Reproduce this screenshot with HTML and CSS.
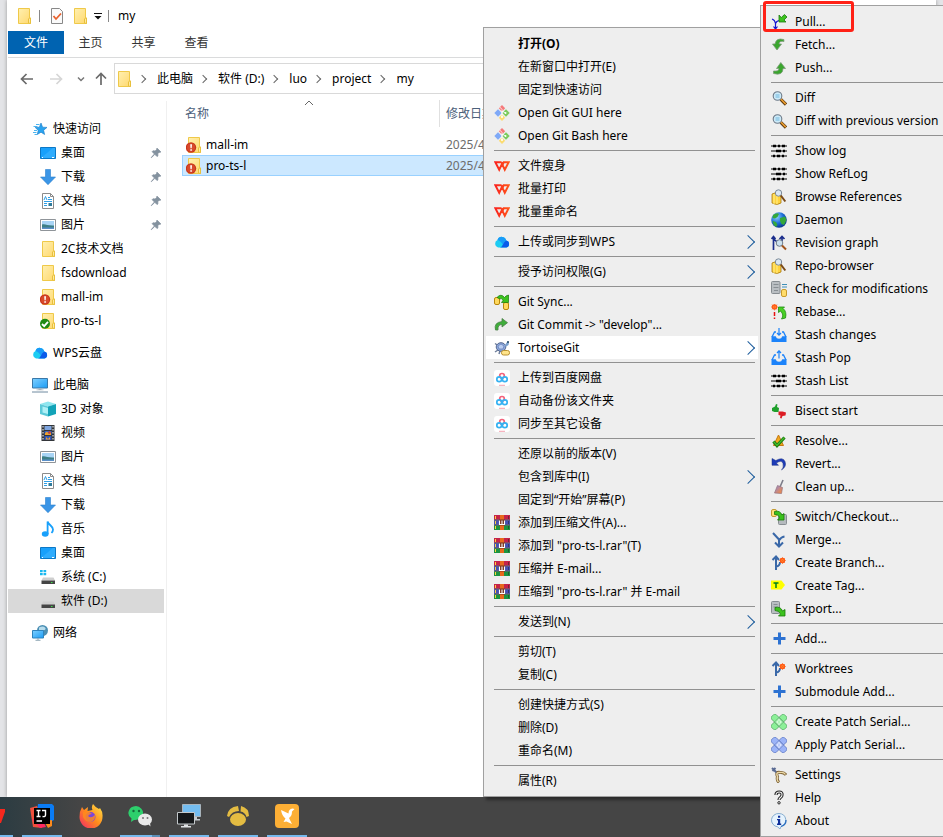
FILE: index.html
```html
<!DOCTYPE html>
<html lang="zh-CN">
  <head>
    <meta charset="utf-8">
    <title>my</title>
    <link rel="stylesheet" href="styles.css">
  </head>
  <body>
    <!-- Icon sprite, everything on a 16x16 grid -->
    <svg class="sprite" aria-hidden="true">
      <defs>
        <linearGradient id="g-folder" x1="0" y1="0" x2="1" y2="1"><stop offset="0" stop-color="#fff0b0"/><stop offset="1" stop-color="#ffd86e"/></linearGradient>
        <linearGradient id="g-cloud" x1="0" y1="0" x2="1" y2="0"><stop offset="0" stop-color="#1cc9f5"/><stop offset="1" stop-color="#1cd8e8"/></linearGradient>
        <linearGradient id="g-screen" x1="0" y1="0" x2="1" y2="1"><stop offset="0" stop-color="#7fd0ff"/><stop offset="1" stop-color="#1b9cf5"/></linearGradient>
        <linearGradient id="g-wps" gradientUnits="userSpaceOnUse" x1="0" y1="0" x2="16" y2="0"><stop offset="0" stop-color="#fa1e1e"/><stop offset="1" stop-color="#ff5a1a"/></linearGradient>
        <linearGradient id="g-broom" x1="0" y1="0" x2="1" y2="1"><stop offset="0" stop-color="#8a8ae0"/><stop offset="1" stop-color="#ff8a30"/></linearGradient>
        <radialGradient id="g-globe" cx=".35" cy=".3" r=".8"><stop offset="0" stop-color="#8fd4ff"/><stop offset=".5" stop-color="#1f6fd8"/><stop offset="1" stop-color="#062a80"/></radialGradient>
        <linearGradient id="g-fox" x1="1" y1="0" x2="0" y2="1"><stop offset="0" stop-color="#ffe94a"/><stop offset=".5" stop-color="#ff8a1c"/><stop offset="1" stop-color="#f0246e"/></linearGradient>
      </defs>
      <symbol id="folder" viewBox="0 0 16 16"><path d="M2.500.5h11v9.500h1v5.500h-12z" fill="url(#g-folder)" stroke="#efc949"/><path d="M12.500 15V11l1-1h1v5.500z" fill="#ffe9a0" stroke="#e8c03c"/></symbol>
      <symbol id="folder-bad" viewBox="0 0 16 16"><use href="#folder"/><circle cx="5" cy="10.500" r="5.200" fill="#c8361c"/><circle cx="5" cy="10.500" r="4" fill="#d84a2c"/><path d="M4.200 7.300h1.800L5.700 11.300H4.500zM4.300 12.200h1.600v1.500H4.300z" fill="#fff"/></symbol>
      <symbol id="folder-ok" viewBox="0 0 16 16"><use href="#folder"/><circle cx="5" cy="10.800" r="5" fill="#1f8a12"/><path d="M2 11l2.200 2.200L8 8.800" fill="none" stroke="#fff" stroke-width="1.800"/></symbol>
      <symbol id="star" viewBox="0 0 16 16"><path d="M9 2l1.600 4.200 4.400.2-3.400 2.800 1 4.300L9 11.200l-3.700 2.300.9-4.200L3.200 6.500l4.200-.3z" fill="#2aa3ef" stroke="#1478c8" stroke-width=".6"/><path d="M4 3.500h3.500M1.500 5.500h4M2 9.500h3M1 11.500h3.500M2.500 13.500H5" stroke="#4ab4f0"/></symbol>
      <symbol id="desktop" viewBox="0 0 16 16"><path d="M.5 2.500h15v11H.5z" fill="#18a0fb" stroke="#0c78c6"/><path d="M1 13L13 3h2v10z" fill="#3fb4ff" opacity=".6"/><path d="M2 12.500h1M12 12.500h2" stroke="#fff"/></symbol>
      <symbol id="download" viewBox="0 0 16 16"><path d="M5.500.5h5v7.500h5L8 15.700.5 8h5z" fill="#3a95e6" stroke="#2a7fce" stroke-width=".6"/></symbol>
      <symbol id="document" viewBox="0 0 16 16"><path d="M2.500.5h8l3 3v12h-11z" fill="#fff" stroke="#8b8b8b"/><path d="M10.500.5v3h3" fill="none" stroke="#8b8b8b"/><path d="M4 7l1.500-3.500L7 7M8 4.500h2M8 6.500h4M4 8.500h8M4 10.500h3M4 12.500h3" fill="none" stroke="#2f9fe6"/><path d="M8.500 10h3.500v3H8.500z" fill="#2f7a9a"/></symbol>
      <symbol id="picture" viewBox="0 0 16 16"><path d="M.5 2.500h15v11H.5z" fill="#fff" stroke="#8f9499"/><path d="M2 4h12v8H2z" fill="#a8d4f5"/><path d="M2 7.500c3-1 6 1.500 12 1V12H2z" fill="#3d7f86"/><path d="M2 10.500h12V12H2z" fill="#5a8fc8"/></symbol>
      <symbol id="cloud" viewBox="0 0 16 16"><path d="M4 13.500a4 4 0 0 1-.5-7.500A4.500 4.500 0 0 1 12.200 6.500 3.600 3.600 0 0 1 12.500 13.500z" fill="url(#g-cloud)"/><path d="M3.500 6A4.500 4.500 0 0 1 12.200 6.500L12 9 9 11Q7 7 3.500 6z" fill="#199bf8"/><path d="M12.200 6.500A3.600 3.600 0 0 1 12.500 13.500H5.500Q8 13 9 10.500T12.200 6.500z" fill="#0b5bea"/></symbol>
      <symbol id="computer" viewBox="0 0 16 16"><path d="M.5 1.500h15v9.500H.5z" fill="url(#g-screen)" stroke="#3a78a8"/><path d="M6.500 11.500h3v1h2v.8h-7v-.8h2z" fill="#a8b4bc"/><path d="M0 15h16" stroke="#6f8aa0"/></symbol>
      <symbol id="cube" viewBox="0 0 16 16"><path d="M0 3l8-2.500L16 3 8 5.500z" fill="#8fe6ef"/><path d="M0 3l8 2.500v10L0 13z" fill="#5cc9d8"/><path d="M16 3L8 5.500v10l8-2.500z" fill="#12a3b8"/><path d="M2.500 5.500L8 7v6l-5.500-1.500z" fill="#aef0f6"/></symbol>
      <symbol id="video" viewBox="0 0 16 16"><path d="M1.500 0h13v16h-13z" fill="#33363a"/><path d="M3 1v14M13 1v14" stroke="#fff" stroke-dasharray="1.500 1.500"/><path d="M4.500 1h7v4h-7z" fill="#7fa6e0"/><path d="M4.500 6h7v4h-7z" fill="#2e62c8"/><path d="M4.500 11h7v4h-7z" fill="#3156b8"/><path d="M5 8l2-1.500L9 9l2-2v3H5zM6 12l2 2 2-2v2.500H6z" fill="#f0a02c"/><circle cx="9.500" cy="7.500" r="1.200" fill="#d83c2c"/></symbol>
      <symbol id="music" viewBox="0 0 16 16"><ellipse cx="5.200" cy="13" rx="3.400" ry="2.700" fill="#18a0fb"/><path d="M7.600 13V.5C8.500 4 13 5 13 8.500c0 1.500-.6 2.500-1.500 3.500" fill="none" stroke="#18a0fb" stroke-width="1.800"/></symbol>
      <symbol id="drive" viewBox="0 0 16 16"><path d="M3 8.500h10.500l1.500 3H1.500z" fill="#cfcfcf"/><path d="M1.500 11.500H15V15H1.500z" fill="#454545"/><path d="M11 13h1.500v1H11z" fill="#3ee04a"/></symbol>
      <symbol id="drive-c" viewBox="0 0 16 16"><use href="#drive"/><path d="M0 1h2.700v2.300H0zM3.500 1h2.700v2.300H3.500zM0 4h2.700v2.300H0zM3.500 4h2.700v2.300H3.500z" fill="#18b8f0"/></symbol>
      <symbol id="network" viewBox="0 0 16 16"><circle cx="10.500" cy="5.500" r="5.500" fill="#4b8fb4"/><path d="M7 2.500q4-2 6 0t-2 3-4 1z" fill="#b7dcec"/><path d="M.5 5.500h11v7.500H.5z" fill="url(#g-screen)" stroke="#2f83bd"/><path d="M3.500 15.300h5M6 13v2" stroke="#8fa7b5"/></symbol>
      <symbol id="pin" viewBox="0 0 16 16"><path d="M9.500 1.500l5 5-1.300.8-.8-.4-2 2 .2 2.900-1.200 1-3-3L2 14.200 1.700 14l4.200-4.700-3-3 1-1.200 3 .2 2-2-.4-.7z" fill="#84929f" stroke="#84929f"/></symbol>
      <symbol id="git" viewBox="0 0 16 16"><path d="M8 0l3.200 3.200L8 6.400 4.800 3.200z" fill="#f57a7a"/><path d="M4 4.300L7.700 8 4 11.700.3 8z" fill="#7fa9f7"/><path d="M12 4.300L15.700 8 12 11.700 8.300 8z" fill="#7bcb5c"/><path d="M8 9.600l3.200 3.200L8 16l-3.200-3.200z" fill="#fbdc72"/><path d="M5.700 2L8 4.400V12M8 6l3.500 2" fill="none" stroke="#fff" stroke-width=".8"/><circle cx="8" cy="12" r="1" fill="#fff"/><circle cx="11.500" cy="8" r="1" fill="#fff"/></symbol>
      <symbol id="wps" viewBox="0 0 16 16"><path d="M7.500 4.200H1.300l3.900 7.600L8 5.800l2.800 6L14.700 4.200h-5L8.300 7.500" fill="none" stroke="url(#g-wps)" stroke-width="2"/></symbol>
      <symbol id="sync" viewBox="0 0 16 16"><rect x=".5" y="3.500" width="5" height="7" rx="1.500" fill="#ffd95e" stroke="#b8860b"/><rect x="9.500" y="8.500" width="5" height="7" rx="1.500" fill="#ffd95e" stroke="#b8860b"/><path d="M3 3.500Q7-1 10.500 3.500L12 2l2.500-1v7.500H7.500L9 6.500Q7.500 3 6 5z" fill="#3cc21e" stroke="#167a08" stroke-width=".7"/></symbol>
      <symbol id="commit" viewBox="0 0 16 16"><path d="M1.500 13Q-.5 5.500 8 4.500V1.500l5.500 4.200L8 10V7.500Q3.500 7.500 4 13z" fill="#3fae3a" stroke="#4d7f4a" stroke-width=".8"/></symbol>
      <symbol id="tortoise" viewBox="0 0 16 16"><path d="M1 3.500l3 2M1 12l3-2M5 14l1-3" stroke="#6f7f9c" stroke-width="1.500"/><ellipse cx="7" cy="7" rx="4.800" ry="4.300" fill="#8ba7dc" stroke="#56688f"/><path d="M4 6l3-2 3 2-1 3H5z" fill="#b8ccf0" stroke="#5a74ac" stroke-width=".6"/><path d="M11 5l2-3 2 .5-.5 2.500-3 2z" fill="#7aa0cc"/><circle cx="14" cy="2" r="1" fill="#174060"/><rect x="7.500" y="10.500" width="8" height="4.500" rx="2" fill="#ffe48a" stroke="#b99030"/></symbol>
      <symbol id="baidu" viewBox="0 0 16 16"><rect width="16" height="16" rx="3" fill="#fff"/><g fill="none" stroke-width="1.700"><circle cx="8" cy="5.800" r="2.300" stroke="#f3627c"/><circle cx="5.200" cy="9.300" r="2.400" stroke="#36b2f2"/><circle cx="10.800" cy="9.300" r="2.400" stroke="#36b2f2"/></g><path d="M5 15.300h6" stroke="#f4a0b0"/></symbol>
      <symbol id="rar" viewBox="0 0 16 16"><path d="M0 0h16v4.700H0z" fill="#c52349"/><path d="M0 5.300h16v4.400H0z" fill="#4650b4"/><path d="M0 10.300h16V15H0z" fill="#1c9440"/><path d="M0 5h16M0 10h16" stroke="#2c2140" stroke-width=".8"/><path d="M6 0h4v15H6z" fill="#e8691c"/><path d="M5 4.500h6v6H5z" fill="#7a3520"/><path d="M5.500 5.500v4h5v-4M8 5.500v4" fill="none" stroke="#fff" stroke-width="1.100"/><path d="M1.500 1v3M1.500 6v3M1.500 11v3" stroke="#ffd23c"/><path d="M14.500 1v3M14.500 6v3M14.500 11v3" stroke="#222" opacity=".5"/></symbol>

      <symbol id="pull" viewBox="0 0 16 16"><path d="M1 5q3 1 3.500 4.500Q5.500 7 8 6.500M4.500 9v6M2.500 12.500l2 2.500 2-2.500" fill="none" stroke="#1414d2" stroke-width="1.200"/><path d="M8 1v7h7l-2-2 3-3-2.500-2.500-3.200 3z" fill="#3cc21e" stroke="#1c7a10" stroke-width=".8"/></symbol>
      <symbol id="fetch" viewBox="0 0 16 16"><path d="M12.800 2.500Q5 .5 4 7H1.500L6 13l4.500-6H8Q8.500 3.500 13 4.500z" fill="#3aa62e" stroke="#7d9a7a" stroke-width=".8"/></symbol>
      <symbol id="push" viewBox="0 0 16 16"><path d="M2.500 13.500Q12 16 12 8.500h2.500L9.800 2.500 5.500 8.500H8Q8 11.500 2.500 11z" fill="#3aa62e" stroke="#7d9a7a" stroke-width=".8"/></symbol>
      <symbol id="diff" viewBox="0 0 16 16"><circle cx="6.500" cy="6" r="4.300" fill="#cdeaf8" stroke="#6d7a88" stroke-width="1.100"/><path d="M4.500 5h4M4.500 7h4" stroke="#6fb6dc"/><path d="M9.800 9.300L15 14.500" stroke="#5c3a12" stroke-width="3.200"/><path d="M10 9.300l4.800 4.800" stroke="#f0a030" stroke-width="1.500"/></symbol>
      <symbol id="log" viewBox="0 0 16 16"><path d="M0 3h16M0 8h16M0 13h16" stroke="#000" stroke-width="1.200"/><path d="M2 1.700h3v2.600H2zM7 1.700h2v2.600H7zM11 1.700h3v2.600h-3zM5 6.700h5v2.600H5zM12 6.700h2v2.600h-2zM2 11.700h2v2.600H2zM6 11.700h3v2.600H6zM11 11.700h2v2.600h-2z" fill="#000"/></symbol>
      <symbol id="browse" viewBox="0 0 16 16"><path d="M1 5q4-3 9 0v9q-4 3-9 0z" fill="#ffd23e" stroke="#a87a14" stroke-width=".8"/><path d="M3 5v10M6 5v10" stroke="#fff08c"/><circle cx="7.500" cy="4" r="3.200" fill="#dbe7f2" stroke="#7c8a98"/><path d="M9.800 6.500l4.500 6" stroke="#7a4a18" stroke-width="2"/></symbol>
      <symbol id="globe" viewBox="0 0 16 16"><circle cx="8" cy="8" r="7.800" fill="url(#g-globe)"/><path d="M2 3q4-3 6-1L6.500 5 4 6.500 1.500 6zM9 6l5-1.500L15.500 8 13 13l-2.500-1L9 9zM2 9l3 1 1.500 3L5 15Q2 13 1.500 9z" fill="#35a83a"/></symbol>
      <symbol id="graph" viewBox="0 0 16 16"><path d="M2.500 15V2M.5 4l2-2.500L4.500 4M3 4L8 9M11 6V2M8.500 4L11 1.500 13.500 4" fill="none" stroke="#1c2e8c" stroke-width="1.700"/><circle cx="8.500" cy="8" r="3.300" fill="#cde2f0" stroke="#6d7a88"/><path d="M11 10.500l4 4" stroke="#a0541c" stroke-width="2"/></symbol>
      <symbol id="check" viewBox="0 0 16 16"><rect x=".5" y=".5" width="8.500" height="12" rx="1" fill="#b9bec2" stroke="#868c91"/><path d="M2.500 3.500h5M2.500 6.500h5M3 9.500h4" stroke="#878e93"/><path d="M11 3.500h5M11 6h5" stroke="#3f8fb8"/><rect x="10.500" y="8.500" width="5" height="7" rx="1.500" fill="#ffdc6a" stroke="#c79a2c"/></symbol>
      <symbol id="rebase" viewBox="0 0 16 16"><path d="M3.500 8v4M3.500 13.500V15" stroke="#e81010" stroke-width="1.500"/><circle cx="3.500" cy="3" r="2" fill="#ffd070" stroke="#ff5a14" stroke-width="1.500"/><path d="M3.500-.5v7M0 3h7M1 .5l5 5M6 .5l-5 5" stroke="#ff5a14" stroke-width=".6"/><path d="M7.500 8.500V3h6L12 4.500q4 3 2.500 9.500l-4 1q3-4-1-8z" fill="#48d024" stroke="#1c8a10" stroke-width=".8"/></symbol>
      <symbol id="stash" viewBox="0 0 16 16"><path d="M5 5H3.500L1 10M11 5h1.500L15 10" fill="none" stroke="#1c83fa" stroke-width="1.300"/><path d="M.5 9.300h4.200q.6 2.500 3.300 2.500t3.300-2.500h4.200V15H.5z" fill="#1c83fa"/><path d="M8 1v7M6 6l2 2.200L10 6" fill="none" stroke="#1c83fa" stroke-width="1.200"/></symbol>
      <symbol id="unstash" viewBox="0 0 16 16"><path d="M5 5H3.500L1 10M11 5h1.500L15 10" fill="none" stroke="#1c83fa" stroke-width="1.300"/><path d="M.5 9.300h4.200q.6 2.500 3.300 2.500t3.300-2.500h4.200V15H.5z" fill="#1c83fa"/><path d="M8 8.500V1M6 3l2-2.200L10 3" fill="none" stroke="#1c83fa" stroke-width="1.200"/></symbol>
      <symbol id="bisect" viewBox="0 0 16 16"><path d="M1 5l3-1.500L5 1l1.500.5-.5 2.500 2 1-.5 4H3.500L1 8z" fill="#1fa02c"/><path d="M7.500 8.500h4l3.500 1-.5 3-3 .5-1 2.500-1.500-.5.5-2.500-2-.5z" fill="#dc1c24"/></symbol>
      <symbol id="resolve" viewBox="0 0 16 16"><path d="M7.500 2l5 10.500h-10z" fill="#f2a91e" stroke="#c47812"/><path d="M2.500 8.500l3.500 4 7.500-8" fill="none" stroke="#1d7c14" stroke-width="3.200"/><path d="M2.700 8.700L6 12.300l7.300-7.600" fill="none" stroke="#49c22c" stroke-width="1.200"/></symbol>
      <symbol id="revert" viewBox="0 0 16 16"><path d="M1 2.500v6.800h6.500L5.300 7Q11 3.500 12 7.500T10.500 14Q16 10.500 14 5.500T4.800 4.500z" fill="#1d3bb8" stroke="#1a3080" stroke-width=".5"/></symbol>
      <symbol id="cleanup" viewBox="0 0 16 16"><path d="M12 1L9 8" stroke="#7c7c88" stroke-width="1.600"/><path d="M6.500 6.500l5 2-1 6-7-.5z" fill="url(#g-broom)" stroke="#93717c" stroke-width=".7"/></symbol>
      <symbol id="switch" viewBox="0 0 16 16"><rect x=".5" y=".5" width="5" height="7" rx="1.500" fill="#ffe07a" stroke="#c39a30"/><rect x="7.500" y="5.500" width="8" height="10" rx="1" fill="#b5babe" stroke="#888e92"/><path d="M3.500 2.500Q9 1 11 6l2-1.500V11H6.500L8.500 9Q7.500 5 3.500 5.500z" fill="#3cc21e" stroke="#167a08" stroke-width=".8"/></symbol>
      <symbol id="merge" viewBox="0 0 16 16"><path d="M2 1L8 7.500v7M13.500 4.500Q10 5 8 8.500M4 10.500L8 14.500l4-4" fill="none" stroke="#3a68a8" stroke-width="2"/></symbol>
      <symbol id="branch" viewBox="0 0 16 16"><path d="M5 15V2M1.500 5L5 1.500 8 5M5 11.500Q9 11 9 7" fill="none" stroke="#3a68a8" stroke-width="2"/><circle cx="11.500" cy="5.500" r="1.900" fill="#ffe36a" stroke="#ff5a14" stroke-width="1.500"/><path d="M11.500 2v7M8 5.500h7M9 3l5 5M14 3L9 8" stroke="#ff5a14" stroke-width=".6"/></symbol>
      <symbol id="tag" viewBox="0 0 16 16"><path d="M0 2.500h10.500l3.500 4.500-3.500 4.500H0z" fill="#ff0"/><path d="M2.500 5h5M5 5v5" stroke="#00801c" stroke-width="1.500"/></symbol>
      <symbol id="export" viewBox="0 0 16 16"><rect x=".5" y=".5" width="8" height="12" rx="1" fill="#b9bec2" stroke="#868c91"/><path d="M2.500 3.500h4M2.500 6h4" stroke="#878e93"/><path d="M4 6.500Q9.500 5 11.500 10l2.500-1.500V15H7.500L9.500 13Q8 9.500 4 9.500z" fill="#3cc21e" stroke="#167a08" stroke-width=".8"/></symbol>
      <symbol id="add" viewBox="0 0 16 16"><path d="M8.500 1.500v12M2.500 7.500h12" stroke="#2d72d2" stroke-width="3"/></symbol>
      <symbol id="patch" viewBox="0 0 16 16"><g stroke="currentColor" stroke-width=".8"><rect x="4.800" y="-1" width="6.400" height="18" rx="1.500" transform="rotate(45 8 8)"/><rect x="4.800" y="-1" width="6.400" height="18" rx="1.500" transform="rotate(-45 8 8)"/><path d="M8 3.500L12.500 8 8 12.500 3.500 8z" fill="#fff" fill-opacity=".3"/></g><path d="M6 8h1M9 8h1M7.500 6h1M7.500 10h1" stroke="#fff"/></symbol>
      <symbol id="settings" viewBox="0 0 16 16"><path d="M1 1l5 5M1.500 4l3-3" stroke="#5a6a92" stroke-width="2"/><path d="M6 6q1-1 3-.5 4-.5 6 2.500M6 6q-.5 2 .5 3.500-1 4 1.500 6" fill="none" stroke="#7c6134" stroke-width="3"/><path d="M6 6q1-1 3-.5 4-.5 5.500 2M6 6q-.5 2 .5 3.500-1 3.500 1 5.500" fill="none" stroke="#ecd9a8" stroke-width="1.400"/></symbol>
      <symbol id="help" viewBox="0 0 16 16"><path d="M5 5q0-3 3.200-3T11 5q0 1.500-1.500 2.500T8 10" fill="none" stroke="#222" stroke-width="3.200"/><path d="M5 5q0-3 3.200-3T11 5q0 1.500-1.500 2.500T8 10" fill="none" stroke="#f4f4f4" stroke-width="1.100"/><circle cx="8" cy="12.800" r="1.200" fill="#fff" stroke="#222"/></symbol>
      <symbol id="about" viewBox="0 0 16 16"><path d="M8 .5a7.200 6.700 0 0 1 2 13L9 16l-2.500-2.200A7.200 6.700 0 0 1 8 .5z" fill="#e6f3fd" stroke="#86add0"/><path d="M10 13.500Q15 12 15 7" fill="none" stroke="#2c6fc0" stroke-width="1.300"/><path d="M7 2.800h2.200v2H7zM6 6h3.200v4.500h1V12H6v-1.500h1V7.300H6z" fill="#10309a"/></symbol>
    </svg>

    <div class="screen">
      <main class="explorer">
        <header class="titlebar">
          <svg class="icon"><use href="#folder"/></svg>
          <span class="divider"></span>
          <svg class="icon" viewBox="0 0 16 16"><path d="M2.500.5h8l3 3v12h-11z" fill="#fafafa" stroke="#888"/><path d="M4.500 8l2.500 3 5-5.500" fill="none" stroke="#e8602c" stroke-width="1.800"/></svg>
          <svg class="icon"><use href="#folder"/></svg>
          <svg class="caret" viewBox="0 0 8 8"><path d="M0 1.500h8" stroke="#111"/><path d="M.5 4h7L4 7.500z" fill="#111"/></svg>
          <span class="divider"></span>
          <h1 class="title">my</h1>
        </header>
        <nav class="tabs">
          <button class="tab tab-file">文件</button>
          <button class="tab">主页</button>
          <button class="tab">共享</button>
          <button class="tab">查看</button>
        </nav>
        <div class="toolbar">
          <button class="nav-button" aria-label="后退"><svg class="icon" viewBox="0 0 16 16"><path d="M14 8H3M7.500 3L2.500 8l5 5" fill="none" stroke="#6a6a6a" stroke-width="1.700"/></svg></button>
          <button class="nav-button" aria-label="前进"><svg class="icon" viewBox="0 0 16 16"><path d="M2 8h11M8.500 3l5 5-5 5" fill="none" stroke="#d6d6d6" stroke-width="1.700"/></svg></button>
          <button class="nav-button nav-small" aria-label="最近"><svg class="caret" viewBox="0 0 8 8"><path d="M1 2.500l3 3 3-3" fill="none" stroke="#777" stroke-width="1.500"/></svg></button>
          <button class="nav-button nav-up" aria-label="上移"><svg class="icon" viewBox="0 0 16 16"><path d="M8 14V3M3 7.500l5-5 5 5" fill="none" stroke="#6a6a6a" stroke-width="1.700"/></svg></button>
          <div class="address">
            <svg class="icon"><use href="#folder"/></svg>
            <a class="crumb" href="#">此电脑</a>
            <a class="crumb" href="#">软件 (D:)</a>
            <a class="crumb" href="#">luo</a>
            <a class="crumb" href="#">project</a>
            <a class="crumb" href="#">my</a>
          </div>
        </div>
        <div class="content">
          <nav class="tree">
            <a class="node root" href="#"><svg class="icon"><use href="#star"/></svg>快速访问</a>
            <a class="node" href="#"><svg class="icon"><use href="#desktop"/></svg>桌面<svg class="pin"><use href="#pin"/></svg></a>
            <a class="node" href="#"><svg class="icon"><use href="#download"/></svg>下载<svg class="pin"><use href="#pin"/></svg></a>
            <a class="node" href="#"><svg class="icon"><use href="#document"/></svg>文档<svg class="pin"><use href="#pin"/></svg></a>
            <a class="node" href="#"><svg class="icon"><use href="#picture"/></svg>图片<svg class="pin"><use href="#pin"/></svg></a>
            <a class="node" href="#"><svg class="icon"><use href="#folder"/></svg>2C技术文档</a>
            <a class="node" href="#"><svg class="icon"><use href="#folder"/></svg>fsdownload</a>
            <a class="node" href="#"><svg class="icon"><use href="#folder-bad"/></svg>mall-im</a>
            <a class="node" href="#"><svg class="icon"><use href="#folder-ok"/></svg>pro-ts-l</a>
            <a class="node root" href="#"><svg class="icon"><use href="#cloud"/></svg>WPS云盘</a>
            <a class="node root" href="#"><svg class="icon"><use href="#computer"/></svg>此电脑</a>
            <a class="node" href="#"><svg class="icon"><use href="#cube"/></svg>3D 对象</a>
            <a class="node" href="#"><svg class="icon"><use href="#video"/></svg>视频</a>
            <a class="node" href="#"><svg class="icon"><use href="#picture"/></svg>图片</a>
            <a class="node" href="#"><svg class="icon"><use href="#document"/></svg>文档</a>
            <a class="node" href="#"><svg class="icon"><use href="#download"/></svg>下载</a>
            <a class="node" href="#"><svg class="icon"><use href="#music"/></svg>音乐</a>
            <a class="node" href="#"><svg class="icon"><use href="#desktop"/></svg>桌面</a>
            <a class="node" href="#"><svg class="icon"><use href="#drive-c"/></svg>系统 (C:)</a>
            <a class="node selected" href="#"><svg class="icon"><use href="#drive"/></svg>软件 (D:)</a>
            <a class="node root" href="#"><svg class="icon"><use href="#network"/></svg>网络</a>
          </nav>
          <div class="listing">
            <table class="files">
              <thead>
                <tr>
                  <th class="col-name">名称<svg class="sort" viewBox="0 0 10 6"><path d="M1 5l4-4 4 4" fill="none" stroke="#666"/></svg></th>
                  <th>修改日期</th>
                </tr>
              </thead>
              <tbody>
                <tr>
                  <td><span class="file"><svg class="icon"><use href="#folder-bad"/></svg>mall-im</span></td>
                  <td class="date">2025/4</td>
                </tr>
                <tr class="active">
                  <td><span class="file"><svg class="icon"><use href="#folder-bad"/></svg>pro-ts-l</span></td>
                  <td class="date">2025/4</td>
                </tr>
              </tbody>
            </table>
          </div>
        </div>
      </main>

      <footer class="taskbar">
        <button class="task running" aria-label="WPS"><svg class="task-icon" viewBox="0 0 24 24"><path d="M8 5h17l-5 14h-4z" fill="#f5281e"/></svg></button>
        <button class="task running" aria-label="IntelliJ IDEA"><svg class="task-icon" viewBox="0 0 24 24"><path d="M0 4l7-2 6 10-1 12-9-1z" fill="#f0503c"/><path d="M2 15l8 9 6-1-4-8z" fill="#ff2a60"/><path d="M8 0h14l2 2v14l-7 4L7 8z" fill="#0a7cf5"/><path d="M14 17l8-1v6l-4 2z" fill="#fb8a1c"/><path d="M4 4h16v16H4z" fill="#000"/><path d="M6.500 6.500h4M8.500 6.500v6M6.500 12.500h4M12 6.500h3.500v4.500q0 2-3 1.500M6.500 17h5.500" fill="none" stroke="#fff" stroke-width="1.400"/></svg></button>
        <button class="task" aria-label="Firefox"><svg class="task-icon" viewBox="0 0 24 24"><path d="M14 0q2 3 6 5l1-1q3 4 2.500 9A11.500 11.500 0 0 1 .5 13Q.5 7 3 3l2 3 4-3-.5 4 5-1Q12 3 14 0z" fill="url(#g-fox)"/><circle cx="11.500" cy="13" r="5" fill="#7a46dc"/><path d="M4 8q5-2 9 2-3 0-4 2 3 3 7-1 1 5-4 7-6 0-8-5z" fill="#ff8a1c" opacity=".85"/></svg></button>
        <button class="task running grouped" aria-label="微信"><svg class="task-icon" viewBox="0 0 24 24"><path d="M8 2a8 7 0 1 1-2 14l-3 2 .5-3.500A8 7 0 0 1 8 2z" fill="#2dcf6c"/><ellipse cx="17" cy="15.500" rx="7" ry="6" fill="#e9e9e9"/><path d="M20 20l2.500 2.500-.5-4z" fill="#e9e9e9"/><g fill="#14683a"><circle cx="5.500" cy="7" r="1.200"/><circle cx="11" cy="7" r="1.200"/></g><g fill="#777"><circle cx="15" cy="14" r="1"/><circle cx="19.500" cy="14" r="1"/></g></svg></button>
        <button class="task running" aria-label="远程桌面"><svg class="task-icon" viewBox="0 0 24 24"><path d="M5.500.5h18v12h-18z" fill="#74bdf0" stroke="#a8b4bc"/><path d="M17 13h3v2h3v1.500h-8z" fill="#c5ccd0"/><path d="M.5 8.500h17v11.500H.5z" fill="#15181a" stroke="#c3c8cb"/><path d="M7 20.500h4v1.500h3V23.500H4V22h3z" fill="#dfe3e5"/></svg></button>
        <button class="task running" aria-label="Navicat"><svg class="task-icon" viewBox="0 0 24 24"><g fill="#e4bc42"><ellipse cx="12" cy="15.500" rx="8" ry="6.500"/><path d="M1 12Q2 3 12 2l1 5Q6 7 3 13zM15 2q8 2 8 10l-2.500 1Q19 8 14.500 7.500z"/></g></svg></button>
        <button class="task running" aria-label="飞鸟"><svg class="task-icon" viewBox="0 0 24 24"><rect width="24" height="24" rx="4" fill="#fdaf35"/><path d="M6 6l7.500 3.500q0-4.500 4-5l2 .5-2.500 2.500q0 4.500-3 6.500l3 6-5.500-2.500-3 .5 2-3.500Q7 12 6 6z" fill="#fff"/></svg></button>
      </footer>

      <div class="menu context-menu" role="menu">
        <button class="menu-item default">打开(O)</button>
        <button class="menu-item">在新窗口中打开(E)</button>
        <button class="menu-item">固定到快速访问</button>
        <button class="menu-item"><svg class="icon"><use href="#git"/></svg>Open Git GUI here</button>
        <button class="menu-item"><svg class="icon"><use href="#git"/></svg>Open Git Bash here</button>
        <hr>
        <button class="menu-item"><svg class="icon"><use href="#wps"/></svg>文件瘦身</button>
        <button class="menu-item"><svg class="icon"><use href="#wps"/></svg>批量打印</button>
        <button class="menu-item"><svg class="icon"><use href="#wps"/></svg>批量重命名</button>
        <hr>
        <button class="menu-item has-sub"><svg class="icon"><use href="#cloud"/></svg>上传或同步到WPS</button>
        <hr>
        <button class="menu-item has-sub">授予访问权限(G)</button>
        <hr>
        <button class="menu-item"><svg class="icon"><use href="#sync"/></svg>Git Sync...</button>
        <button class="menu-item"><svg class="icon"><use href="#commit"/></svg>Git Commit -&gt; "develop"...</button>
        <button class="menu-item has-sub open"><svg class="icon"><use href="#tortoise"/></svg>TortoiseGit</button>
        <hr>
        <button class="menu-item"><svg class="icon"><use href="#baidu"/></svg>上传到百度网盘</button>
        <button class="menu-item"><svg class="icon"><use href="#baidu"/></svg>自动备份该文件夹</button>
        <button class="menu-item"><svg class="icon"><use href="#baidu"/></svg>同步至其它设备</button>
        <hr>
        <button class="menu-item">还原以前的版本(V)</button>
        <button class="menu-item has-sub">包含到库中(I)</button>
        <button class="menu-item">固定到“开始”屏幕(P)</button>
        <button class="menu-item"><svg class="icon"><use href="#rar"/></svg>添加到压缩文件(A)...</button>
        <button class="menu-item"><svg class="icon"><use href="#rar"/></svg>添加到 "pro-ts-l.rar"(T)</button>
        <button class="menu-item"><svg class="icon"><use href="#rar"/></svg>压缩并 E-mail...</button>
        <button class="menu-item"><svg class="icon"><use href="#rar"/></svg>压缩到 "pro-ts-l.rar" 并 E-mail</button>
        <hr>
        <button class="menu-item has-sub">发送到(N)</button>
        <hr>
        <button class="menu-item">剪切(T)</button>
        <button class="menu-item">复制(C)</button>
        <hr>
        <button class="menu-item">创建快捷方式(S)</button>
        <button class="menu-item">删除(D)</button>
        <button class="menu-item">重命名(M)</button>
        <hr>
        <button class="menu-item">属性(R)</button>
      </div>

      <div class="menu git-menu" role="menu">
        <button class="menu-item"><svg class="icon"><use href="#pull"/></svg>Pull...</button>
        <button class="menu-item"><svg class="icon"><use href="#fetch"/></svg>Fetch...</button>
        <button class="menu-item"><svg class="icon"><use href="#push"/></svg>Push...</button>
        <hr>
        <button class="menu-item"><svg class="icon"><use href="#diff"/></svg>Diff</button>
        <button class="menu-item"><svg class="icon"><use href="#diff"/></svg>Diff with previous version</button>
        <hr>
        <button class="menu-item"><svg class="icon"><use href="#log"/></svg>Show log</button>
        <button class="menu-item"><svg class="icon"><use href="#log"/></svg>Show RefLog</button>
        <button class="menu-item"><svg class="icon"><use href="#browse"/></svg>Browse References</button>
        <button class="menu-item"><svg class="icon"><use href="#globe"/></svg>Daemon</button>
        <button class="menu-item"><svg class="icon"><use href="#graph"/></svg>Revision graph</button>
        <button class="menu-item"><svg class="icon"><use href="#browse"/></svg>Repo-browser</button>
        <button class="menu-item"><svg class="icon"><use href="#check"/></svg>Check for modifications</button>
        <button class="menu-item"><svg class="icon"><use href="#rebase"/></svg>Rebase...</button>
        <button class="menu-item"><svg class="icon"><use href="#stash"/></svg>Stash changes</button>
        <button class="menu-item"><svg class="icon"><use href="#unstash"/></svg>Stash Pop</button>
        <button class="menu-item"><svg class="icon"><use href="#log"/></svg>Stash List</button>
        <hr>
        <button class="menu-item"><svg class="icon"><use href="#bisect"/></svg>Bisect start</button>
        <hr>
        <button class="menu-item"><svg class="icon"><use href="#resolve"/></svg>Resolve...</button>
        <button class="menu-item"><svg class="icon"><use href="#revert"/></svg>Revert...</button>
        <button class="menu-item"><svg class="icon"><use href="#cleanup"/></svg>Clean up...</button>
        <hr>
        <button class="menu-item"><svg class="icon"><use href="#switch"/></svg>Switch/Checkout...</button>
        <button class="menu-item"><svg class="icon"><use href="#merge"/></svg>Merge...</button>
        <button class="menu-item"><svg class="icon"><use href="#branch"/></svg>Create Branch...</button>
        <button class="menu-item"><svg class="icon"><use href="#tag"/></svg>Create Tag...</button>
        <button class="menu-item"><svg class="icon"><use href="#export"/></svg>Export...</button>
        <hr>
        <button class="menu-item"><svg class="icon"><use href="#add"/></svg>Add...</button>
        <hr>
        <button class="menu-item"><svg class="icon"><use href="#branch"/></svg>Worktrees</button>
        <button class="menu-item"><svg class="icon"><use href="#add"/></svg>Submodule Add...</button>
        <hr>
        <button class="menu-item"><svg class="icon patch-green"><use href="#patch"/></svg>Create Patch Serial...</button>
        <button class="menu-item"><svg class="icon patch-blue"><use href="#patch"/></svg>Apply Patch Serial...</button>
        <hr>
        <button class="menu-item"><svg class="icon"><use href="#settings"/></svg>Settings</button>
        <button class="menu-item"><svg class="icon"><use href="#help"/></svg>Help</button>
        <button class="menu-item"><svg class="icon"><use href="#about"/></svg>About</button>
      </div>
      <div class="marker"></div>
    </div>
  </body>
</html>
```
FILE: styles.css
```css
* {
  box-sizing: border-box;
}
body {
  margin: 0;
  overflow: hidden;
  font-family: "Noto Sans", "Noto Sans CJK SC", sans-serif;
  font-size: 12px;
  line-height: 16px;
  color: #000;
}
button {
  font: inherit;
  color: inherit;
  background: none;
  border: none;
  padding: 0;
}
a {
  color: inherit;
  text-decoration: none;
}
.sprite {
  position: absolute;
  width: 0;
  height: 0;
}
.icon {
  width: 16px;
  height: 16px;
  flex: none;
}
.caret {
  width: 8px;
  height: 8px;
}
.screen {
  position: relative;
  display: flex;
  flex-direction: column;
  height: 100vh;
  background: #e3e4e7;
}

/* Explorer window */
.explorer {
  flex: 1;
  display: flex;
  flex-direction: column;
  min-height: 0;
  margin: 0 7px;
  padding-left: 1px;
  background: #fff;
  box-shadow: 0 0 4px #999;
}
.titlebar {
  display: flex;
  align-items: center;
  gap: 7px;
  height: 31px;
  padding-left: 8px;
}
.titlebar .caret {
  margin: 0 -1px;
}
.divider {
  width: 1px;
  height: 12px;
  margin-right: 2px;
  background: #888;
}
.title {
  margin: 0;
  font-size: 12px;
  font-weight: normal;
}
.tabs {
  display: flex;
  height: 27px;
  border-bottom: 1px solid #dadbdc;
}
.tab {
  width: 53px;
  height: 23px;
  color: #333;
}
.tab-file {
  width: 56px;
  background: #0063b1;
  color: #fff;
}
.toolbar {
  display: flex;
  align-items: center;
  padding: 5px 0 6px 11px;
}
.nav-button {
  display: flex;
  width: 29px;
}
.nav-small {
  width: 16px;
}
.nav-up {
  width: 21px;
}
.address {
  flex: 1;
  display: flex;
  align-items: center;
  height: 31px;
  padding-left: 1px;
  border: 1px solid #d9d9d9;
}
.crumb {
  display: flex;
  align-items: center;
}
.crumb::before {
  content: "";
  width: 5px;
  height: 5px;
  margin: 0 12px 0 7px;
  border-top: 1px solid #666;
  border-right: 1px solid #666;
  transform: rotate(45deg);
}
.content {
  flex: 1;
  display: flex;
  min-height: 0;
}

/* Navigation tree */
.tree {
  width: 159px;
  padding: 8px 2px 0 0;
  margin-top: 1px;
  border-right: 1px solid #f0f0f0;
}
.node {
  display: flex;
  align-items: center;
  gap: 5px;
  height: 24px;
  padding-left: 32px;
}
.root {
  margin-top: 8px;
  padding-left: 24px;
}
.selected {
  background: #d9d9d9;
}
.pin {
  width: 12px;
  height: 12px;
  margin: 0 2px 0 auto;
}

/* File list */
.listing {
  flex: 1;
  padding-left: 15px;
}
.files {
  width: 100%;
  table-layout: fixed;
  border-collapse: collapse;
}
.files th {
  position: relative;
  height: 34px;
  padding: 0 7px 6px;
  font-weight: normal;
  text-align: left;
  color: #4c607a;
}
.files th + th {
  background: linear-gradient(#e0e0e0, #e0e0e0) no-repeat 0 0 / 1px 27px;
}
.files .col-name {
  width: 257px;
  padding-left: 3px;
}
.sort {
  position: absolute;
  top: 0;
  left: 122px;
  width: 10px;
  height: 6px;
}
.files td {
  height: 21px;
  padding: 0 4px;
}
.files .date {
  padding-left: 7px;
  color: #6d6d6d;
}
.file {
  display: flex;
  align-items: center;
  gap: 4px;
}
.active {
  background: #cce8ff;
  outline: 1px solid #99d1ff;
  outline-offset: -1px;
}

/* Taskbar */
.taskbar {
  display: flex;
  gap: 9px;
  height: 40px;
  background: linear-gradient(90deg, #2c3c42, #454545 80px);
}
.task {
  flex: none;
  display: flex;
  align-items: center;
  justify-content: center;
  width: 40px;
  border-bottom: 2px solid transparent;
}
.task:first-child {
  margin-left: -27px;
}
.running {
  border-color: #76b9ed;
}
.grouped {
  border-image: linear-gradient(90deg, #76b9ed 31px, #5a8db5 31px) 2;
}
.task-icon {
  width: 24px;
  height: 24px;
}

/* Popup menus */
.menu {
  position: absolute;
  padding: 4px 2px;
  background: #eee;
  border: 1px solid #a0a0a0;
}
.context-menu {
  top: 27px;
  left: 483px;
  width: 278px;
  box-shadow: 3px 3px 3px rgba(0, 0, 0, 0.4);
}
.git-menu {
  top: 5px;
  left: 760px;
  right: 0;
  padding-right: 0;
  border-right: none;
}
.menu-item {
  display: flex;
  align-items: center;
  width: 100%;
  height: 23px;
  padding-left: 32px;
  white-space: nowrap;
}
.menu-item .icon {
  margin: 0 8px 0 -24px;
}
.default {
  font-weight: bold;
}
.open {
  background: #fff;
}
.has-sub::after {
  content: "";
  width: 9px;
  height: 9px;
  margin: 0 5px 0 auto;
  border-top: 1px solid #1c5c9c;
  border-right: 1px solid #1c5c9c;
  transform: rotate(45deg);
}
.menu hr {
  height: 1px;
  margin: 3px 3px 3px 8px;
  border: none;
  background: #919191;
}
.git-menu hr {
  margin-right: 0;
}
.patch-green {
  color: #58a868;
  fill: #8cf098;
}
.patch-blue {
  color: #6078c0;
  fill: #9cb4f8;
}

/* Red frame round the Pull entry */
.marker {
  position: absolute;
  top: 1px;
  left: 763px;
  width: 91px;
  height: 31px;
  border: 3px solid #ff2116;
  border-radius: 3px;
}
```
